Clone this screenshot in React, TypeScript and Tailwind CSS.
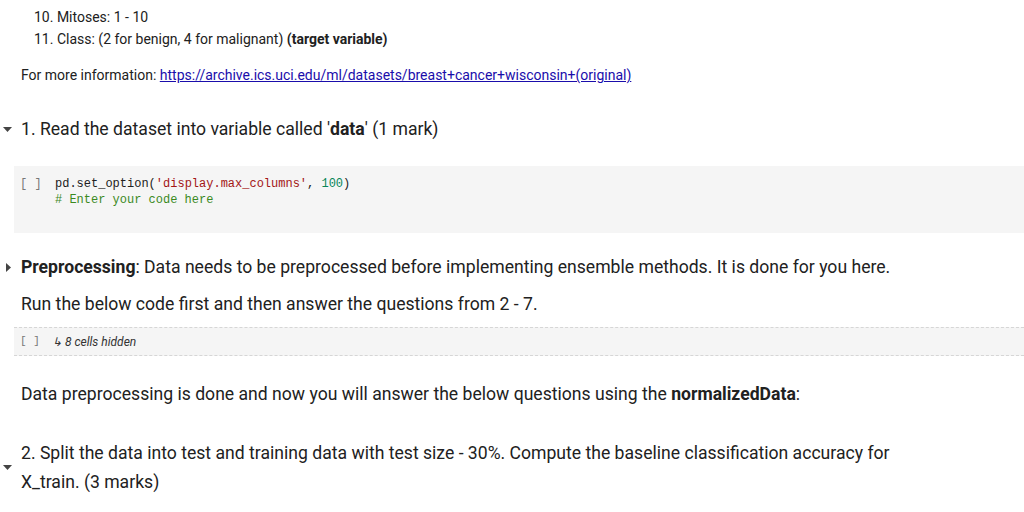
import React from "react";

const sans = { fontFamily: "Roboto, 'Liberation Sans', sans-serif" };

function CaretDown() {
  return (
    <svg width="9" height="5" viewBox="0 0 9 5" className="fill-[#444]">
      <path d="M0 0 L9 0 L4.5 5 Z" />
    </svg>
  );
}

function CaretRight() {
  return (
    <svg width="5" height="9" viewBox="0 0 5 9" className="fill-[#444]">
      <path d="M0 0 L5 4.5 L0 9 Z" />
    </svg>
  );
}

export default function App() {
  return (
    <div className="h-[512px] w-[1024px] overflow-hidden bg-white text-[#212121]" style={sans}>
      {/* list tail */}
      <div className="pl-[34px] pt-[6px] text-[14px] leading-[22px]">
        <div>10. Mitoses: 1 - 10</div>
        <div>
          11. Class: (2 for benign, 4 for malignant) <b className="font-bold">(target variable)</b>
        </div>
      </div>

      <div className="mt-[14px] pl-[21px] text-[14px] leading-[22px]">
        For more information:{" "}
        <a className="text-[#1a0dab] underline" href="#">
          https://archive.ics.uci.edu/ml/datasets/breast+cancer+wisconsin+(original)
        </a>
      </div>

      {/* question 1 */}
      <div className="relative mt-[29px] pl-[21px] text-[17.6px] leading-[28px]">
        <span className="absolute left-[3px] top-[12px] flex">
          <CaretDown />
        </span>
        1. Read the dataset into variable called '<b className="font-bold">data</b>' (1 mark)
      </div>

      <div className="ml-[14px] mt-[23px] h-[67px] bg-[#f5f5f5] pt-[10px]">
        <div className="flex text-[12px] leading-[16px]" style={{ fontFamily: "'Liberation Mono', monospace" }}>
          <span className="w-[41px] pl-[6px] text-[#777]">[ ]</span>
          <div>
            <div>
              <span className="text-[#212121]">pd.set_option(</span>
              <span className="text-[#a31515]">'display.max_columns'</span>
              <span>, </span>
              <span className="text-[#098658]">100</span>
              <span>)</span>
            </div>
            <div className="text-[#3b8a1e]"># Enter your code here</div>
          </div>
        </div>
      </div>

      {/* preprocessing */}
      <div className="relative mt-[20px] pl-[21px] text-[17.6px] leading-[28px]">
        <span className="absolute left-[6px] top-[10px] flex">
          <CaretRight />
        </span>
        <b className="font-bold">Preprocessing</b>: Data needs to be preprocessed before implementing ensemble methods. It is done for you here.
      </div>
      <div className="mt-[9px] pl-[21px] text-[17.6px] leading-[28px]">
        Run the below code first and then answer the questions from 2 - 7.
      </div>

      <div className="ml-[14px] mt-[9px] flex h-[29px] items-center border-y border-dashed border-[#d6d6d6] bg-[#f5f5f5]">
        <span className="w-[38px] pl-[6px] text-[11px] text-[#777]" style={{ fontFamily: "'Liberation Mono', monospace" }}>
          [ ]
        </span>
        <span className="text-[12px] italic text-[#333]">↳ 8 cells hidden</span>
      </div>

      <div className="mt-[24px] pl-[21px] text-[17.6px] leading-[28px]">
        Data preprocessing is done and now you will answer the below questions using the{" "}
        <b className="font-bold">normalizedData</b>:
      </div>

      {/* question 2 */}
      <div className="relative mt-[31px] pl-[21px] text-[17.6px] leading-[29px]">
        <span className="absolute left-[3px] top-[26px] flex">
          <CaretDown />
        </span>
        <div>2. Split the data into test and training data with test size - 30%. Compute the baseline classification accuracy for</div>
        <div>X_train. (3 marks)</div>
      </div>
    </div>
  );
}
